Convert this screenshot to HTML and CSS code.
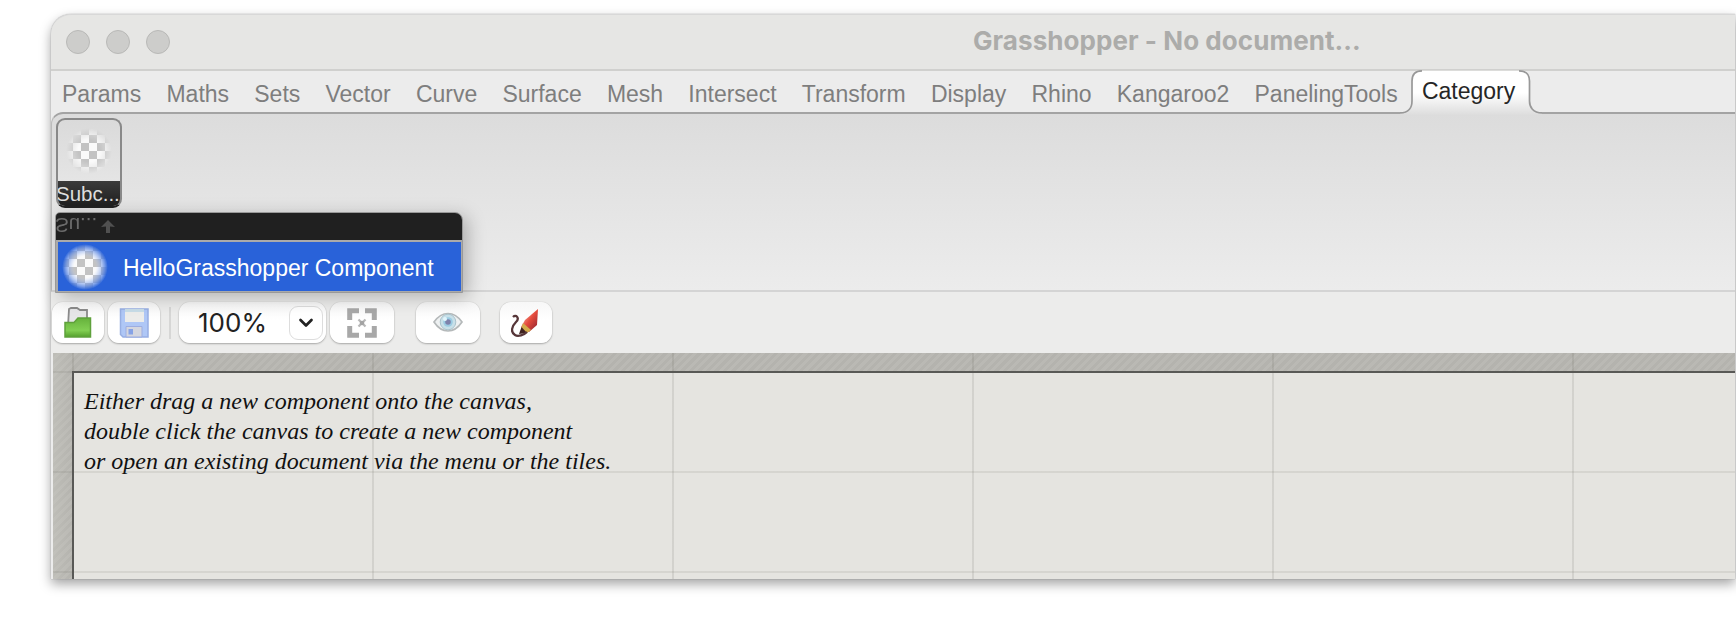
FILE: index.html
```html
<!DOCTYPE html>
<html lang="en">
<head>
<meta charset="utf-8">
<title>Grasshopper</title>
<link rel="stylesheet" href="styles.css">
</head>
<body>
<div class="window">
  <header class="titlebar">
    <div class="lights"><i></i><i></i><i></i></div>
    <div class="title">Grasshopper - No document...</div>
  </header>
  <nav class="tabs">
    <span>Params</span><span>Maths</span><span>Sets</span><span>Vector</span><span>Curve</span><span>Surface</span><span>Mesh</span><span>Intersect</span><span>Transform</span><span>Display</span><span>Rhino</span><span>Kangaroo2</span><span>PanelingTools</span>
    <div class="active">
      <svg width="124" height="46" viewBox="0 0 124 46">
        <defs><linearGradient id="tab" x1="0" y1="0" x2="0" y2="1"><stop offset=".5" stop-color="#fff"/><stop offset="1" stop-color="#dddddd"/></linearGradient></defs>
        <path d="M-4 43C5 43 8 37 8 31V11Q8 .8 18 .8H115Q125.500 .8 125.500 11V31C125.500 37 129 43 138 43V45H-4Z" fill="url(#tab)"/>
        <path d="M-4 43C5 43 8 37 8 31V11Q8 .8 18 .8M115 .8Q125.500 .8 125.500 11V31C125.500 37 129 43 138 43" fill="none" stroke="#989898" stroke-width="1.700"/>
      </svg>
      <b>Category</b>
    </div>
  </nav>
  <section class="ribbon">
    <div class="group">
      <svg class="checker" width="48" height="48" viewBox="0 0 48 48">
        <defs>
          <pattern id="chk" width="16" height="16" patternUnits="userSpaceOnUse"><path d="M0 0H16V16H0Z" fill="#c3c3c3"/><path d="M0 0H8V8H0ZM8 8H16V16H8Z" fill="#fafafa"/></pattern>
          <radialGradient id="fade"><stop offset=".45" stop-color="#fff"/><stop offset=".95" stop-color="#fff" stop-opacity="0"/></radialGradient>
          <mask id="round"><circle cx="24" cy="24" r="24" fill="url(#fade)"/></mask>
        </defs>
        <g mask="url(#round)"><path d="M0 -8H48V48H0Z" fill="url(#chk)" transform="translate(0 8)"/></g>
      </svg>
      <div class="group-name">Subc...</div>
    </div>
    <div class="menu">
      <div class="menu-head"><span>Su...</span><svg width="14" height="14" viewBox="0 0 14 14"><path d="M7 0L14 7L9 6.500V13H5V6.500L0 7Z" fill="#505050"/></svg></div>
      <div class="menu-item">
        <svg width="48" height="48" viewBox="0 0 48 48">
          <defs><radialGradient id="glow"><stop offset=".45" stop-color="#c9daff" stop-opacity=".8"/><stop offset=".95" stop-color="#c9daff" stop-opacity="0"/></radialGradient></defs>
          <circle cx="24" cy="24" r="24" fill="url(#glow)"/>
          <g mask="url(#round)"><path d="M0 -8H48V48H0Z" fill="url(#chk)" transform="translate(0 8)"/></g>
        </svg>
        <span>HelloGrasshopper Component</span>
      </div>
    </div>
  </section>
  <section class="toolbar">
    <div class="btn open"><svg width="30" height="34" viewBox="0 0 30 34">
      <defs><linearGradient id="grn" x1="0" y1="0" x2="0" y2="1"><stop offset="0" stop-color="#66b23c"/><stop offset=".65" stop-color="#82cf53"/><stop offset="1" stop-color="#55a02d"/></linearGradient></defs>
      <path d="M5 20L6 3L8 2H14L17 4H24V18Z" fill="#e6e6e8" stroke="#8b8b8b" stroke-width="1.800"/>
      <path d="M2 16.500H11L15 12H27.500V31H2Z" fill="url(#grn)" stroke="#5fa13c" stroke-width="1.500"/></svg></div>
    <div class="btn save"><svg width="30" height="34" viewBox="0 0 30 34">
      <path d="M1.500 3H29V31H4L1.500 28.500Z" fill="#afc7f6" stroke="#98afe3" stroke-width="1.500"/>
      <path d="M6 3H25V16H6Z" fill="#ececea"/><path d="M6 3H25V6H6Z" fill="#c8dde8"/>
      <path d="M7 20.500H23V31H7Z" fill="#d4d6df" stroke="#9dade0"/><path d="M9.500 23H14V28.500H9.500Z" fill="#86a2e6"/></svg></div>
    <div class="sep"></div>
    <div class="btn zoom"><span>100%</span><div class="drop"><svg width="16" height="10" viewBox="0 0 16 10"><path d="M2.500 2L8 7.500L13.500 2" fill="none" stroke="#222" stroke-width="2.700" stroke-linecap="round" stroke-linejoin="round"/></svg></div></div>
    <div class="btn fit"><svg width="30" height="30" viewBox="0 0 30 30"><path d="M2.700 12V2.700H12M18 2.700H27.300V12M27.300 18V27.300H18M12 27.300H2.700V18" fill="none" stroke="#a8a8a8" stroke-width="5"/><path d="M11.500 11.500L18.500 18.500M18.500 11.500L11.500 18.500" stroke="#b8b8b8" stroke-width="2.300"/><circle cx="15" cy="15" r="2.300" fill="#a3a3a3"/></svg></div>
    <div class="btn eye"><svg width="30" height="24" viewBox="0 0 30 24"><path d="M1 11Q7 2.500 15 2.500T29 11Q23 20 15 20T1 11Z" fill="#eef1f2" stroke="#b5b9ba" stroke-width="1.700"/><circle cx="15" cy="11" r="7.800" fill="#c8e0e9" stroke="#abc3cc"/><circle cx="15" cy="11" r="4.800" fill="#9ccce3"/><circle cx="15" cy="11" r="2.800" fill="#7e82ab"/><circle cx="12" cy="8" r="2" fill="#e2f5fb"/></svg></div>
    <div class="btn pen"><svg width="30" height="30" viewBox="0 0 30 30">
      <defs><linearGradient id="red" x1="0" y1="0" x2="1" y2="1"><stop offset=".2" stop-color="#f3a294"/><stop offset=".5" stop-color="#e54a3c"/><stop offset=".8" stop-color="#ab3034"/></linearGradient></defs>
      <path d="M27 1L14 12L10 19L18 24L26 17Z" fill="url(#red)"/><path d="M12 15L10 21L16 25L20 22Z" fill="#d3ab4b"/><path d="M10.500 19L8 26L16 25Z" fill="#40221f"/>
      <path d="M2 9C5 6 9 10 5 14C1 18 -1 24 4 27C7 29 13 27 16 24" fill="none" stroke="#563639" stroke-width="2.300"/></svg></div>
  </section>
  <main class="canvas">
    <div class="page"><p>Either drag a new component onto the canvas,<br>double click the canvas to create a new component<br>or open an existing document via the menu or the tiles.</p></div>
    <div class="grid"></div>
  </main>
</div>
</body>
</html>
```
FILE: styles.css
```css
* { box-sizing: border-box; }
body { margin: 0; background: #fff; height: 618px; overflow: hidden; padding: 14px 1px 0 51px; font-family: "Liberation Sans", sans-serif; }
.window { width: 1684px; height: 565px; display: flex; flex-direction: column; border-radius: 20px 0 0 0; background: #ececec; box-shadow: 0 5px 12px rgba(0,0,0,.36), 0 0 1px rgba(0,0,0,.5); }
.titlebar { height: 57px; flex: none; background: #e6e6e4; border-bottom: 2px solid #d0d0ce; border-top: 1px solid #d8d8d8; border-radius: 20px 0 0 0; display: flex; align-items: center; padding-left: 15px; }
.lights { display: flex; gap: 16px; }
.lights i { width: 24px; height: 24px; border-radius: 50%; background: #cdcdcb; border: 1.5px solid #b9b9b7; }
.title { margin-left: 803px; font: 700 26px "Inter", sans-serif; letter-spacing: .06px; color: #acacaa; white-space: nowrap; padding-bottom: 3px; }
.tabs { position: relative; z-index: 1; height: 41px; flex: none; display: flex; align-items: center; gap: 25.2px; padding: 5px 0 0 11px; font-size: 23px; color: #7e7e7e; white-space: nowrap; }
.active { position: relative; width: 124px; height: 46px; flex: none; margin: -2px 0 0 -19px; }
.active svg { display: block; overflow: visible; }
.active b { position: absolute; left: 18px; top: 8px; font-weight: 400; color: #262626; }
.ribbon { height: 180px; flex: none; background: linear-gradient(#dcdcdc, #ececec); border-top: 2px solid #a3a3a3; border-bottom: 2px solid #d4d4d4; border-left: 1px solid #bbb; border-radius: 12px 0 0 0; padding: 4px 0 0 4px; }
.group { width: 66px; height: 90px; border: 2px solid #898989; border-bottom-color: #222; border-radius: 9px; background: linear-gradient(#dadada, #e9e9e9); overflow: hidden; }
.checker { display: block; margin: 7px 7px 6px; }
.group-name { height: 27px; background: linear-gradient(#3b3b3b, #1d1d1d); color: #ddd; font-size: 20.5px; line-height: 25px; margin-left: -2px; }
.menu { position: relative; z-index: 3; width: 408px; height: 81px; margin: 4px 0 0 -1px; background: #aaa; border: 1px solid #999; border-radius: 5px 8px 0 0; box-shadow: 5px 4px 18px rgba(0,0,0,.25); overflow: hidden; }
.menu-head { height: 27px; background: #202020; display: flex; align-items: center; gap: 4px; font-size: 20.5px; }
.menu-head span { transform: scaleY(-1); color: #6b6b6b; margin: -4px 0 0 -1px; }
.menu-item { height: 49px; margin: 2px 1px 0 2px; background: #2962d9; display: flex; align-items: center; color: #fff; font-size: 23px; padding-left: 3px; gap: 14px; white-space: nowrap; }
.menu-item span { padding-top: 3px; }
.toolbar { height: 61px; flex: none; background: #ececeb; display: flex; padding: 10px 0 0 1px; }
.btn { height: 41px; background: linear-gradient(#f7f7f7, #fff 45%); border-radius: 11px; box-shadow: 0 1px 2px rgba(0,0,0,.28), 0 0 1px rgba(0,0,0,.2); display: flex; align-items: center; justify-content: center; }
.open, .save, .pen { width: 52px; }
.save { margin-left: 4px; }
.sep { width: 2px; height: 32px; background: #d6d6d5; margin: 5px 8px 0 9px; }
.zoom { width: 147px; font: 26px "Inter", sans-serif; color: #222; padding-left: 19px; justify-content: space-between; padding-right: 3px; }
.drop { width: 34px; height: 34px; border-radius: 9px; background: #fff; border: 1px solid #ddd; display: flex; align-items: center; justify-content: center; }
.fit { width: 64px; margin-left: 4px; }
.eye { width: 64px; margin-left: 22px; }
.pen { margin-left: 20px; }
.canvas { position: relative; flex: 1; min-height: 0; margin-left: 2px; padding: 18px 0 0 19px; background: linear-gradient(90deg, rgba(205,205,198,.4), transparent 20px), repeating-linear-gradient(135deg, #b4b3ae 0 3px, #bab9b4 3px 6px); }
.page { height: 100%; background: #e5e4e0; border: 2px solid #595957; border-width: 2px 0 0 2px; padding: 13px 0 0 10px; }
.page p { margin: 0; font: italic 24px/30px "Liberation Serif", serif; color: #111; white-space: nowrap; }
.grid { position: absolute; inset: 0; background: repeating-linear-gradient(90deg, rgba(90,90,80,.13) 0 2px, transparent 2px 300px) 19px 0 / 1800px 100%, repeating-linear-gradient(rgba(90,90,80,.11) 0 2px, transparent 2px 100px) 0 18px / 100% 1000px; }
```
